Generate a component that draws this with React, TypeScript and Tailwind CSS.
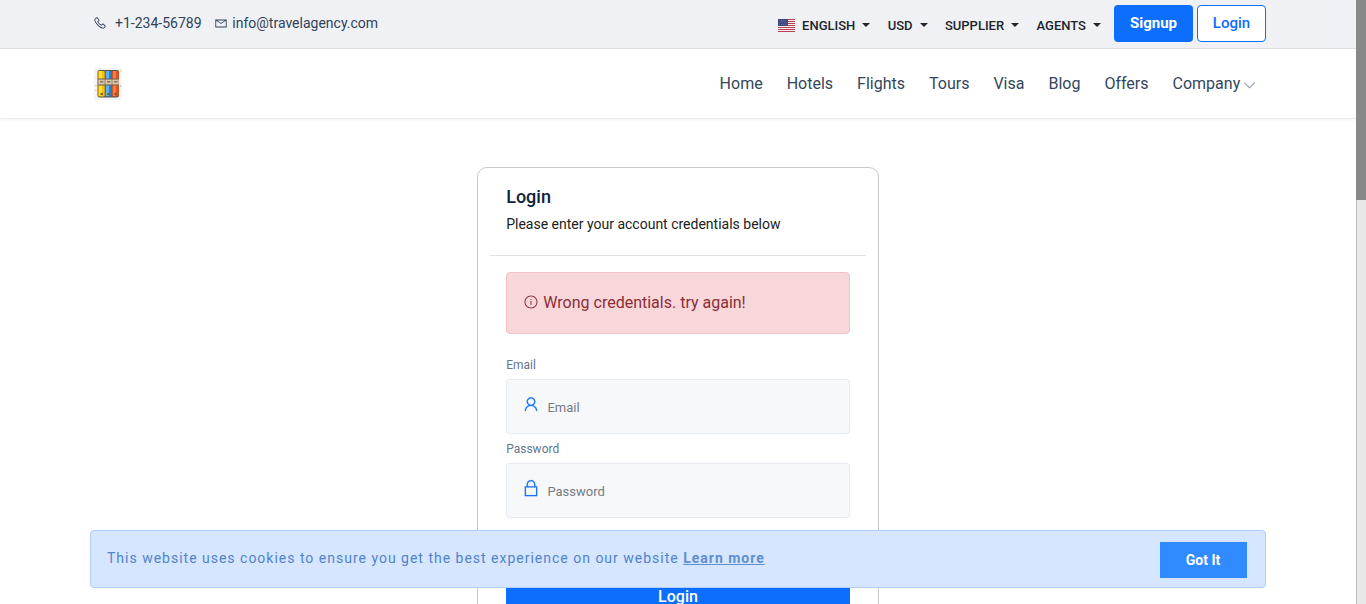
import type { ReactNode } from "react";
import {
  LiaAngleDownSolid,
  LiaEnvelope,
  LiaInfoCircleSolid,
  LiaLockSolid,
  LiaPhoneSolid,
  LiaUser,
} from "react-icons/lia";

const navLinks = ["Home", "Hotels", "Flights", "Tours", "Visa", "Blog", "Offers"];

function Flag() {
  return (
    <svg width="17" height="13" viewBox="0 0 17 13" shapeRendering="crispEdges" className="-mt-px mr-[7px]">
      <rect width="17" height="13" fill="#f4f1f3" />
      {[0, 2, 4, 6, 8, 10, 12].map((y) => (
        <rect key={y} y={y} width="17" height="1" fill="#b9404e" />
      ))}
      <rect width="10" height="7" fill="#3c4a80" />
      {[1, 3, 5].map((y) =>
        [1, 3, 5, 7].map((x) => <rect key={`${x}-${y}`} x={x + (y === 3 ? 1 : 0)} y={y} width="1" height="1" fill="#5c6895" />)
      )}
    </svg>
  );
}

function Logo() {
  const cases = [
    { x: 4, light: "#ffe02c", dark: "#f6bd0a" },
    { x: 11, light: "#5fb0ee", dark: "#2f80c6" },
    { x: 18, light: "#fb7c3e", dark: "#e8501c" },
  ];
  return (
    <svg width="28" height="32" viewBox="0 0 28 32">
      <rect width="28" height="32" fill="#f5f5f5" />
      <rect x="3.5" y="2" width="21.5" height="27.5" rx="2" fill="#5a554c" />
      {cases.map((c) => (
        <g key={c.x}>
          <rect x={c.x + 0.3} y="3" width="6.4" height="25.5" rx="0.8" fill={c.dark} />
          <rect x={c.x + 0.9} y="3" width="3.1" height="25" fill={c.light} />
          <rect x={c.x + 2.4} y="24.8" width="2.4" height="2.4" rx="1" fill="#7a5a33" />
        </g>
      ))}
      <rect x="4" y="10.5" width="20.5" height="7" fill="#675c50" />
      {cases.map((c) => (
        <g key={c.x}>
          <rect x={c.x + 0.3} y="11.5" width="6.4" height="5" fill="#dcc6a3" />
          <rect x={c.x + 2} y="13.2" width="3.4" height="1.2" fill="#77634e" />
        </g>
      ))}
      <circle cx="26.3" cy="3" r="0.8" fill="#fbd45c" />
      <circle cx="1.8" cy="9.8" r="0.6" fill="#fbd45c" />
      <circle cx="2" cy="17.5" r="0.7" fill="#f3a58c" />
      <circle cx="1.8" cy="22.5" r="0.7" fill="#f3b9a4" />
      <circle cx="26.6" cy="18" r="0.7" fill="#80b9e7" />
    </svg>
  );
}

function TopMenu({ label, children }: { label: string; children?: ReactNode }) {
  return (
    <button className="flex items-center text-[13px] leading-5 font-medium text-[#212529]">
      {children}
      {label}
      <svg width="8" height="4" viewBox="0 0 8 4" className="ml-[7px] -mt-[2px]">
        <path d="M0 0h8L4 4z" fill="#212529" />
      </svg>
    </button>
  );
}

function Field({ label, type, icon }: { label: string; type: string; icon: ReactNode }) {
  return (
    <label className="block">
      <span className="mb-[4px] block h-5 pl-[0.2px] text-[12px] leading-5 text-[#64758d]">{label}</span>
      <span className="flex h-[55px] items-center rounded-[3px] border border-[#e6ebf1] bg-[#f7f8fa] pl-[14.4px]">
        <span className="mb-[6px] text-[#1a76ff]">{icon}</span>
        <input
          type={type}
          placeholder={label}
          className="ml-[6px] mt-[2px] w-64 bg-transparent text-[13px] leading-5 outline-none placeholder:text-[#757b81]"
        />
      </span>
    </label>
  );
}

export default function App() {
  return (
    <div className="relative flex h-[604px] w-[1366px] overflow-hidden bg-white font-['Roboto',sans-serif] text-[#0d233e]">
      <div className="flex w-[1356px] flex-col">
        <div className="flex h-[49px] shrink-0 items-start justify-between border-b border-[#e0e1e7] bg-[#eff1f5] pl-[93px] pr-[90px]">
          <div className="flex h-[46px] items-center text-[14px] text-[#2f425a]">
            <LiaPhoneSolid size={14} />
            <span className="ml-2">+1-234-56789</span>
            <LiaEnvelope size={14} className="ml-[12.4px]" />
            <span className="ml-[4.4px]">info@travelagency.com</span>
          </div>
          <div className="flex pt-[5px]">
            <div className="mr-[13px] flex h-[41px] items-center gap-[17.4px]">
              <TopMenu label="ENGLISH">
                <Flag />
              </TopMenu>
              <TopMenu label="USD" />
              <TopMenu label="SUPPLIER" />
              <TopMenu label="AGENTS" />
            </div>
            <button className="mr-1 h-[37px] w-[79px] rounded-[4px] bg-[#0d6efd] text-[15px] font-bold text-white">
              Signup
            </button>
            <button className="h-[37px] w-[69px] rounded-[4px] border border-[#0d6efd] bg-white text-[15px] font-medium text-[#0d6efd]">
              Login
            </button>
          </div>
        </div>

        <header className="flex h-[70px] shrink-0 items-center justify-between border-b border-[#ececee] pl-[94px] pr-[99.8px] shadow-[0_1px_3px_rgba(0,0,0,0.05)]">
          <Logo />
          <nav className="flex items-center gap-6 text-[16px] text-[#33465d]">
            {navLinks.map((link) => (
              <a key={link}>{link}</a>
            ))}
            <a className="flex items-center">
              Company
              <LiaAngleDownSolid size={13} strokeWidth={0.8} className="ml-[3px] mt-[2px] text-[#8b95a1]" />
            </a>
          </nav>
        </header>

        <main className="mx-auto mt-[48px] h-[540px] w-[402px] shrink-0 rounded-[10px] border border-[#c8c8c8] px-[12px]">
          <div className="h-[88px] border-b border-[#dee2e3] pr-[16px] pl-[16.2px] pt-[17px]">
            <h1 className="text-[18px] leading-6 font-medium">Login</h1>
            <p className="mt-[5px] text-[14px] leading-5 text-[#212121]">Please enter your account credentials below</p>
          </div>
          <form className="px-[16px] pt-4">
            <div className="mb-[21px] flex h-[62px] items-center rounded-[4px] border border-[#f5c2c7] bg-[#f8d7da] pl-[16.3px] text-[16px] text-[#8c2d36]">
              <LiaInfoCircleSolid size={16} className="mb-[2px]" />
              <span className="ml-1">Wrong credentials. try again!</span>
            </div>
            <Field label="Email" type="email" icon={<LiaUser size={20} strokeWidth={0.3} />} />
            <div className="h-[5px]" />
            <Field label="Password" type="password" icon={<LiaLockSolid size={20} strokeWidth={0.2} />} />
            <button className="mt-[56px] flex h-[45px] w-full items-center justify-center bg-[#0d6efd] text-[16px] font-medium text-white">
              Login
            </button>
          </form>
        </main>
      </div>

      <div className="w-[10px] border-l border-[#bdbdbd] bg-[#e8e8e8]">
        <div className="-ml-px h-[200px] w-[10px] bg-[#888888]" />
      </div>

      <aside className="absolute top-[530px] left-[90px] flex h-[58px] w-[1176px] items-center justify-between rounded-[4px] border border-[#b0cefb] bg-[#d7e6ff] pr-[18px] pl-[16px]">
        <p className="mb-[2px] text-[14px] tracking-[0.995px] text-[#4f83cd]">
          This website uses cookies to ensure you get the best experience on our website{" "}
          <a className="font-bold text-[#5c8fd3] underline">Learn more</a>
        </p>
        <button className="mt-[2px] h-[36px] w-[87px] bg-[#2f8bff] pr-[7px] pl-[6px] text-[14px] font-bold text-white">Got It</button>
      </aside>
    </div>
  );
}
